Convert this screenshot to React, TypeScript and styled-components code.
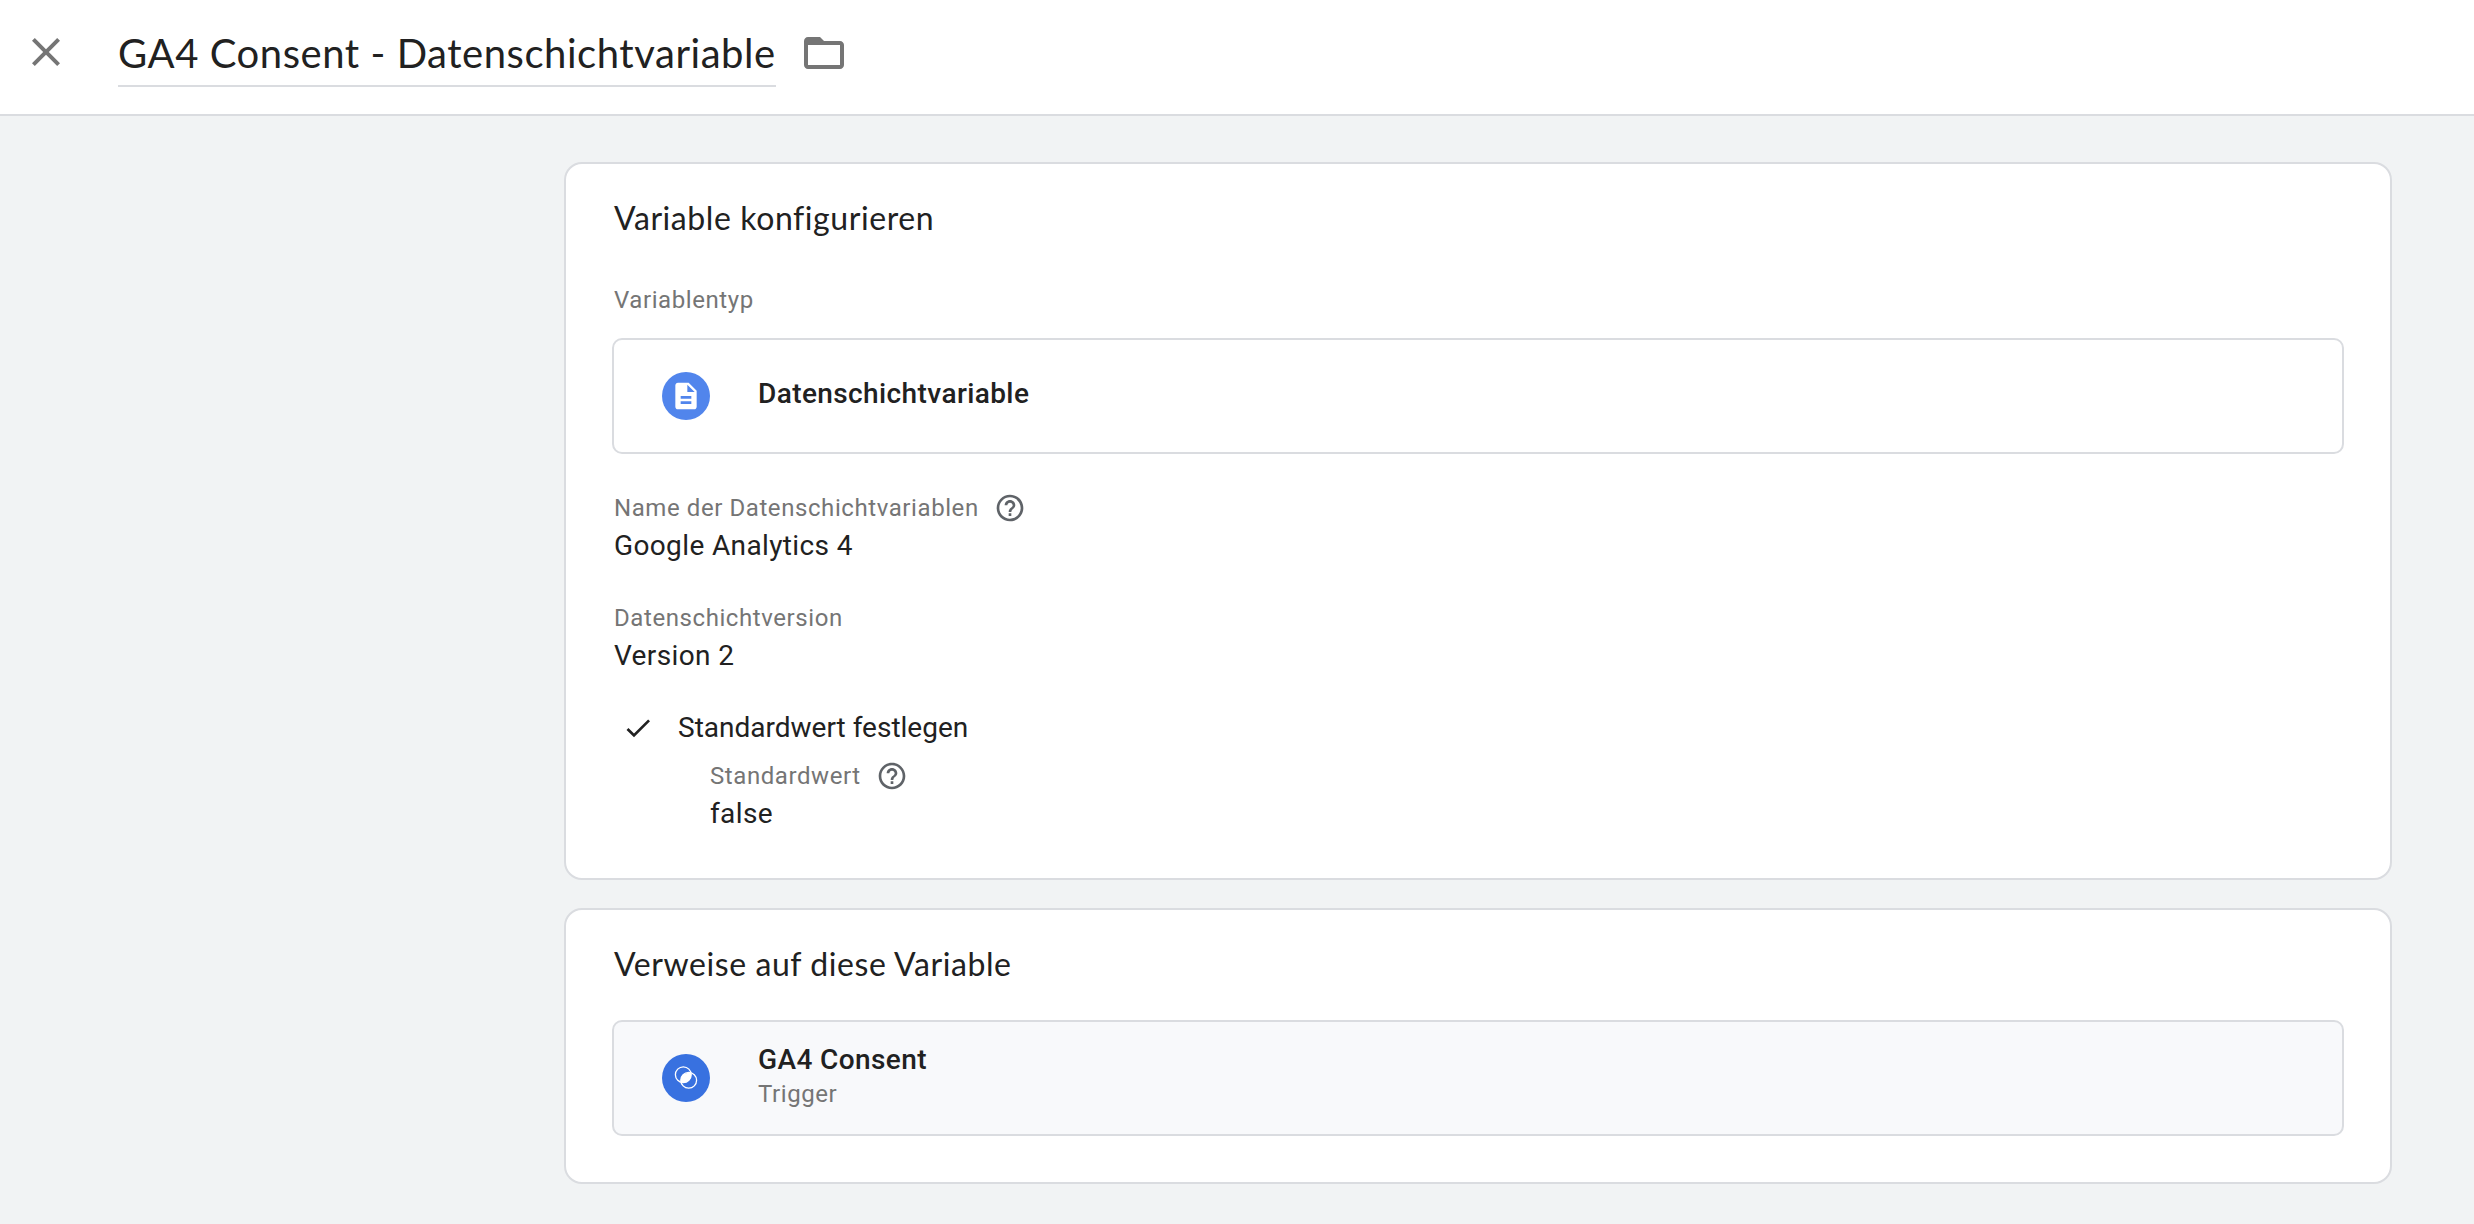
import React from 'react';
import styled, { createGlobalStyle } from 'styled-components';

const GlobalStyle = createGlobalStyle`
  *, *::before, *::after { box-sizing: border-box; }
  body {
    margin: 0;
    background: #f1f3f4;
    color: #212121;
    font-family: Roboto, 'Noto Sans', sans-serif;
  }
`;

const Page = styled.div`
  display: flex;
  flex-direction: column;
  min-height: 100vh;
`;

const Header = styled.header`
  display: flex;
  align-items: flex-start;
  height: 116px;
  padding: 28px 22px 0;
  background: #fff;
  border-bottom: 2px solid #dadce0;
`;

const IconButton = styled.button`
  display: flex;
  flex: none;
  padding: 0;
  border: 0;
  background: none;
  color: #757575;
`;

const Title = styled.h1`
  flex: none;
  width: 658px;
  height: 59px;
  margin: 0 24px 0 48px;
  border-bottom: 2px solid #dadce0;
  font: 400 40px/50px Lato, 'Noto Sans', sans-serif;
  letter-spacing: 0.547px;
  white-space: nowrap;
`;

const FolderButton = styled(IconButton)`
  padding-top: 1px;
`;

const Content = styled.main`
  display: flex;
  flex-direction: column;
  gap: 28px;
  padding: 46px 82px 40px 564px;
`;

const Card = styled.section<{ $bottom?: number }>`
  padding: 33px 46px ${(p) => p.$bottom ?? 46}px;
  background: #fff;
  border: 2px solid #dadce0;
  border-radius: 18px;
`;

const CardTitle = styled.h2`
  margin: 0 0 0 2px;
  font: 400 32px/42px Lato, 'Noto Sans', sans-serif;
  letter-spacing: 0.58px;
`;

const Label = styled.div`
  font-size: 24px;
  line-height: 32px;
  letter-spacing: 0.58px;
  color: #757575;
`;

const TypeLabel = styled(Label)`
  margin: 45px 0 22px 2px;
`;

const Tile = styled.div<{ $shaded?: boolean }>`
  display: flex;
  align-items: center;
  gap: 48px;
  height: 116px;
  padding: 0 48px;
  background: ${(p) => (p.$shaded ? '#f8f9fb' : '#fff')};
  border: 2px solid #dadce0;
  border-radius: 10px;
`;

const ReferenceTile = styled(Tile)`
  margin-top: 35px;
`;

const Badge = styled.span<{ $color: string }>`
  display: grid;
  place-items: center;
  width: 48px;
  height: 48px;
  border-radius: 50%;
  background: ${(p) => p.$color};
  color: #fff;
`;

const TileText = styled.div`
  display: flex;
  flex-direction: column;
  padding-bottom: 5px;
`;

const TileName = styled.div`
  font-size: 28px;
  font-weight: 500;
  line-height: 32px;
  letter-spacing: 0.4px;
`;

const TileKind = styled(Label)`
  margin: 2px 0 -3px;
`;

const Field = styled.div<{ $top: number; $indent?: number }>`
  display: flex;
  flex-direction: column;
  gap: 6px;
  margin-top: ${(p) => p.$top}px;
  padding-left: ${(p) => 2 + (p.$indent ?? 0)}px;
`;

const FieldHead = styled.div`
  display: flex;
  align-items: center;
  gap: 15px;
  height: 32px;
  color: #5f6368;
`;

const Value = styled.div`
  font-size: 28px;
  line-height: 32px;
  letter-spacing: 0.37px;
`;

const CheckRow = styled.div`
  display: flex;
  align-items: center;
  gap: 24px;
  height: 32px;
  margin-top: 40px;
  padding-left: 10px;
`;

const CheckText = styled.span`
  font-size: 28px;
  line-height: 32px;
`;

const PATHS = {
  close: 'M19 6.41 17.59 5 12 10.59 6.41 5 5 6.41 10.59 12 5 17.59 6.41 19 12 13.41 17.59 19 19 17.59 13.41 12z',
  folder: 'M20 6h-8l-2-2H4c-1.1 0-1.99.9-1.99 2L2 18c0 1.1.9 2 2 2h16c1.1 0 2-.9 2-2V8c0-1.1-.9-2-2-2zm0 12H4V8h16v10z',
  document: 'M14 2H6c-1.1 0-1.99.9-1.99 2L4 20c0 1.1.89 2 1.99 2H18c1.1 0 2-.9 2-2V8l-6-6zm2 16H8v-2h8v2zm0-4H8v-2h8v2zm-3-5V3.5L18.5 9H13z',
  help: 'M11 18h2v-2h-2v2zm1-16C6.48 2 2 6.48 2 12s4.48 10 10 10 10-4.48 10-10S17.52 2 12 2zm0 18c-4.41 0-8-3.59-8-8s3.59-8 8-8 8 3.59 8 8-3.59 8-8 8zm0-14c-2.21 0-4 1.79-4 4h2c0-1.1.9-2 2-2s2 .9 2 2c0 2-3 1.75-3 5h2c0-2.25 3-2.5 3-5 0-2.21-1.79-4-4-4z',
  check: 'M9 16.17 4.83 12l-1.42 1.41L9 19 21 7l-1.41-1.41z',
};

function Icon({ name, size = 32 }: { name: keyof typeof PATHS; size?: number }) {
  return (
    <svg width={size} height={size} viewBox="0 0 24 24" fill="currentColor" aria-hidden="true">
      <path d={PATHS[name]} />
    </svg>
  );
}

function TriggerIcon() {
  return (
    <svg width="48" height="48" viewBox="0 0 48 48" fill="none" stroke="currentColor" strokeWidth="1.3">
      <circle cx="21.3" cy="20.7" r="7.9" />
      <circle cx="26.7" cy="26.3" r="7.9" />
      <path
        d="M29.1 18.8 C30 25 26 29.2 18.9 28.3 C18 22 22 17.9 29.1 18.8z"
        fill="currentColor"
        stroke="none"
      />
    </svg>
  );
}

interface FieldProps {
  label: string;
  value: string;
  top: number;
  indent?: number;
  help?: boolean;
}

function ReadonlyField({ label, value, top, indent, help }: FieldProps) {
  return (
    <Field $top={top} $indent={indent}>
      <FieldHead>
        <Label>{label}</Label>
        {help && <Icon name="help" />}
      </FieldHead>
      <Value>{value}</Value>
    </Field>
  );
}

export default function App() {
  return (
    <Page>
      <GlobalStyle />
      <Header>
        <IconButton aria-label="Schließen">
          <Icon name="close" size={48} />
        </IconButton>
        <Title>GA4 Consent - Datenschichtvariable</Title>
        <FolderButton aria-label="Ordner">
          <Icon name="folder" size={48} />
        </FolderButton>
      </Header>
      <Content>
        <Card $bottom={48}>
          <CardTitle>Variable konfigurieren</CardTitle>
          <TypeLabel>Variablentyp</TypeLabel>
          <Tile>
            <Badge $color="#5185ec">
              <Icon name="document" />
            </Badge>
            <TileText>
              <TileName>Datenschichtvariable</TileName>
            </TileText>
          </Tile>
          <ReadonlyField label="Name der Datenschichtvariablen" value="Google Analytics 4" top={38} help />
          <ReadonlyField label="Datenschichtversion" value="Version 2" top={40} />
          <CheckRow>
            <Icon name="check" />
            <CheckText>Standardwert festlegen</CheckText>
          </CheckRow>
          <ReadonlyField label="Standardwert" value="false" top={16} indent={96} help />
        </Card>
        <Card>
          <CardTitle>Verweise auf diese Variable</CardTitle>
          <ReferenceTile $shaded>
            <Badge $color="#3871e0">
              <TriggerIcon />
            </Badge>
            <TileText>
              <TileName>GA4 Consent</TileName>
              <TileKind>Trigger</TileKind>
            </TileText>
          </ReferenceTile>
        </Card>
      </Content>
    </Page>
  );
}
